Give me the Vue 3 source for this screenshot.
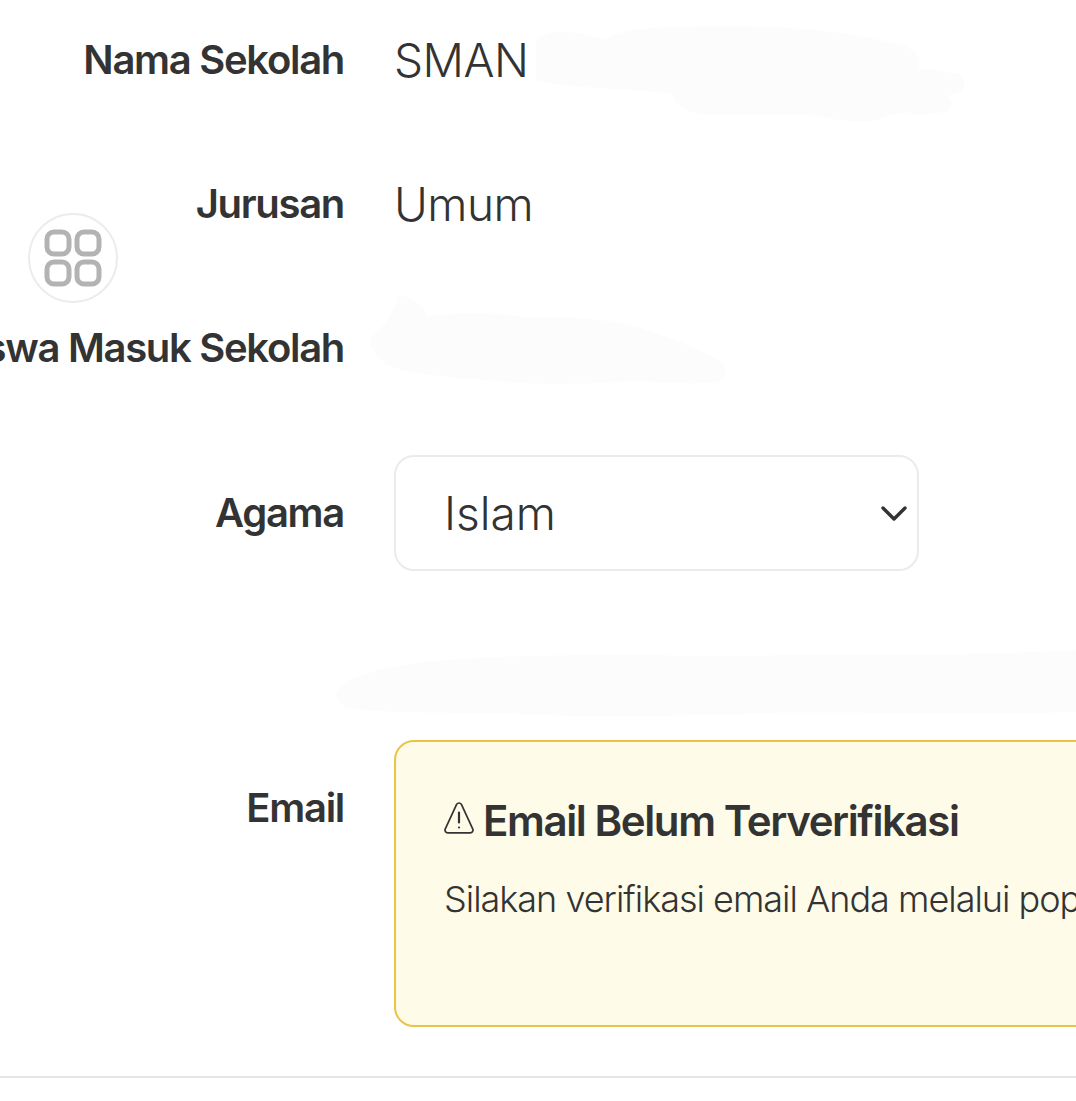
<template>
  <div class="page">
    <div class="form">
      <div class="row row-school">
        <div class="label">Nama Sekolah</div>
        <div class="value">SMAN</div>
      </div>
      <div class="row row-major">
        <div class="label">Jurusan</div>
        <div class="value">Umum</div>
      </div>
      <div class="row row-year">
        <div class="label">Tahun Siswa Masuk Sekolah</div>
      </div>
      <div class="row row-religion">
        <div class="label">Agama</div>
        <div class="select-wrap">
          <select class="form-select">
            <option>Islam</option>
          </select>
          <svg class="select-icon" viewBox="0 0 26 16" fill="none" stroke="#333" stroke-width="3.4" stroke-linecap="round" stroke-linejoin="round">
            <path d="M2 3l11 11L24 3" />
          </svg>
        </div>
      </div>
      <div class="row row-email">
        <div class="label label-email">Email</div>
        <div class="email-col">
          <div class="alert">
            <div class="alert-title">
              <svg class="alert-icon" viewBox="0 0 30 34" fill="none" stroke="#333" stroke-width="1.7" stroke-linejoin="round" stroke-linecap="round">
                <path d="M12.6 3.4c1.1-1.9 3.7-1.9 4.8 0l11.3 24.4c.9 1.9-.4 4-2.4 4H3.700c-2 0-3.300-2.100-2.400-4z" />
                <path d="M15 11.500v10" stroke-width="2.200" />
                <circle cx="15" cy="26.500" r="1.100" fill="#333" stroke="none" />
              </svg>
              <span>Email Belum Terverifikasi</span>
            </div>
            <div class="alert-text">Silakan verifikasi email Anda melalui pop up yang tersedia di halaman ini</div>
          </div>
          <div class="input-box"></div>
        </div>
      </div>
    </div>

    <!-- blurred-out parts of the original shot -->
    <svg class="smudges" viewBox="0 0 1076 1101" fill="#fcfcfc">
      <path d="M536 40c20-14 40-8 70 0 10-12 60-14 120-14 80 0 130 8 180 20 12 6 16 12 12 22l42 6c6 6 6 12 0 18l-12 4c6 8 4 12-2 16-20 2-30 4-40 0l-18 4c-14 8-40 6-60 2-20-6-100-2-122-4-20 0-30-8-34-20-60-8-100-4-136-14z" />
      <path d="M370 340c6-10 20-14 28-44 8-2 22 4 30 20 30-4 70-4 100 2 30-2 90 0 124 14 20 6 50 18 70 30 6 8 4 16-4 20-30 4-70-2-100 0-40 2-90 4-130-2-30-2-70-4-100-14-10-8-16-16-18-26z" />
      <path d="M336 694c6-16 40-26 90-32 70-8 190-8 290-6 100-2 220 2 360-6v62c-140 4-260-2-340 2-60 2-150 4-210 0-80-2-140 0-180-6-6-4-10-10-10-14z" />
    </svg>

    <button class="fab" type="button">
      <svg viewBox="0 0 58 58" fill="none" stroke="#b3b3b3" stroke-width="5">
        <rect x="3" y="3" width="22" height="22" rx="7" />
        <rect x="33" y="3" width="22" height="22" rx="7" />
        <rect x="3" y="33" width="22" height="22" rx="7" />
        <rect x="33" y="33" width="22" height="22" rx="7" />
      </svg>
    </button>

    <div class="bottom-bar"></div>
  </div>
</template>

<script setup>
</script>

<style>
html,
body {
  overflow: hidden;
  background: #fff;
}
</style>

<style scoped>
.page {
  position: relative;
  width: 1076px;
  height: 1101px;
  overflow: hidden;
  background: #fff;
  color: #333;
  font-family: Inter, "Noto Sans", sans-serif;
}

.form {
  padding-top: 36px;
}

.row {
  display: flex;
  gap: 50px;
}

.row-school,
.row-major,
.row-year {
  height: 48px;
  align-items: center;
  margin-bottom: 96px;
}

.row-year {
  margin-bottom: 83px;
}

.row-religion {
  align-items: center;
  margin-bottom: 169px;
}

.label {
  display: flex;
  justify-content: flex-end;
  flex: 0 0 344px;
  width: 344px;
  white-space: nowrap;
  font-size: 40px;
  font-weight: 600;
  letter-spacing: -1.3px;
  line-height: 48px;
}

.label-email {
  padding-top: 44px;
}

.value {
  font-size: 46px;
  font-weight: 300;
  line-height: 48px;
  letter-spacing: -0.5px;
}

.select-wrap {
  position: relative;
  width: 525px;
  height: 116px;
}

.form-select {
  width: 100%;
  height: 100%;
  padding: 0 48px;
  appearance: none;
  background: #fff;
  border: 2px solid #ebebeb;
  border-radius: 20px;
  color: #333;
  font-family: inherit;
  font-size: 46px;
  font-weight: 300;
  outline: none;
}

.select-icon {
  position: absolute;
  right: 12px;
  top: 50%;
  width: 26px;
  height: 16px;
  transform: translateY(-50%);
  pointer-events: none;
}

.email-col {
  flex: 0 0 900px;
  width: 900px;
}

.alert {
  height: 231px;
  padding: 52px 48px 0;
  background: #fefbe8;
  border: 2px solid #e8c547;
  border-radius: 20px;
}

.alert-title {
  display: flex;
  align-items: center;
  gap: 9px;
  height: 52px;
  font-size: 42px;
  font-weight: 600;
  letter-spacing: -1.4px;
  white-space: nowrap;
}

.alert-icon {
  width: 30px;
  height: 34px;
  margin-top: -4px;
}

.alert-text {
  margin-top: 30px;
  font-size: 36px;
  font-weight: 300;
  letter-spacing: -1px;
  line-height: 46px;
  white-space: nowrap;
}

.input-box {
  height: 116px;
  margin-top: 72px;
  background: #fff;
  border: 2px solid #ebebeb;
  border-radius: 20px;
}

.smudges {
  position: absolute;
  inset: 0;
  width: 100%;
  height: 100%;
  pointer-events: none;
}

.fab {
  position: absolute;
  left: 28px;
  top: 213px;
  display: flex;
  align-items: center;
  justify-content: center;
  width: 90px;
  height: 90px;
  padding: 0;
  background: #fff;
  border: 2px solid #ececec;
  border-radius: 50%;
}

.fab svg {
  width: 58px;
  height: 58px;
}

.bottom-bar {
  position: absolute;
  left: 0;
  right: 0;
  bottom: 0;
  height: 23px;
  background: #fff;
  border-top: 2px solid #e6e6e6;
}
</style>
